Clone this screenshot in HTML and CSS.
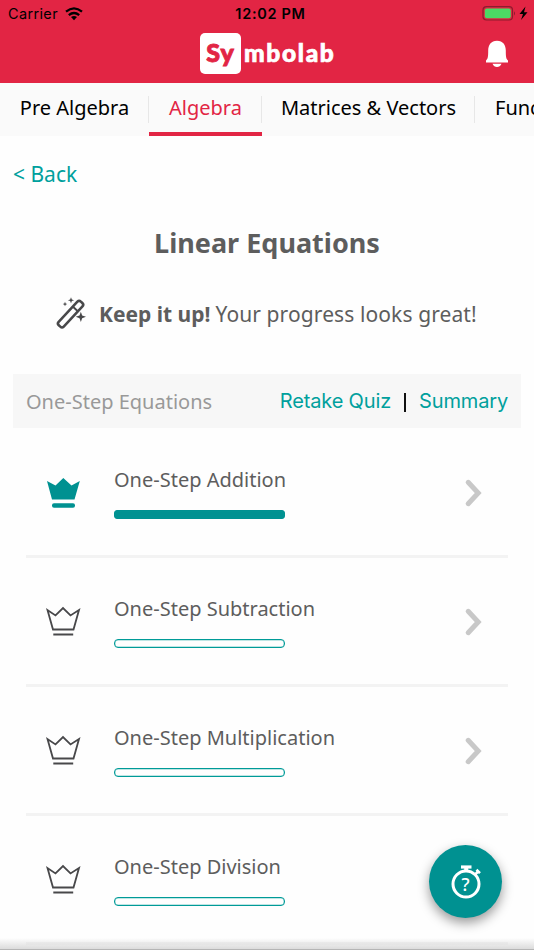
FILE: index.html
```html
<!DOCTYPE html>
<html lang="en">
<head>
<meta charset="utf-8">
<title>Symbolab</title>
<link rel="stylesheet" href="styles.css">
</head>
<body>
<svg class="defs" width="0" height="0">
  <symbol id="crown" viewBox="0 0 36 34"><path d="M2.500 5L8 24.500H28.500L34 5L25.500 10.400L18 3L10.500 10.400Z M8.300 29.500H28.200" fill="none" stroke="#48484a" stroke-width="1.800"/></symbol>
  <symbol id="chevron" viewBox="0 0 20 30"><path d="M4.200 4.300L14.200 15L4.200 25.700" fill="none" stroke="#c8c8c8" stroke-width="5" stroke-linecap="round" stroke-linejoin="miter"/></symbol>
</svg>
<div class="screen">
  <header class="header">
    <div class="status">
      <div class="carrier"><span class="carrier-name">Carrier</span>
        <svg width="18" height="14" viewBox="0 0 18 14"><g fill="none" stroke="#000" stroke-width="2.300"><path d="M1 4.700Q9-1.900 17 4.700"/><path d="M3.800 8.200Q9 3.900 14.200 8.200"/></g><path d="M6 10.100Q9 7.900 12 10.100L9 13.200Z"/></svg>
      </div>
      <span class="clock">12:02 PM</span>
      <svg class="battery" width="46" height="16" viewBox="0 0 46 16"><rect x="1" y=".7" width="29.500" height="13.300" rx="3.500" fill="none" stroke="#8e1c2d" stroke-width="1.200"/><rect x="2.800" y="2.500" width="26" height="9.700" rx="2" fill="#4cd964"/><path d="M32 5.200q2 2 0 4.300z" fill="#8e1c2d"/><path d="M43.500 .5L37.500 8.100H41L39 14L45.500 6.200H42Z"/></svg>
    </div>
    <div class="brand-row">
      <div class="brand"><span class="brand-tile">Sy</span><span class="brand-rest">mbolab</span></div>
      <svg class="bell" width="24" height="28" viewBox="0 0 24 28"><path d="M12 .7C6 .7 3.200 5 3.200 10.500C3.200 16.500 3 18.800 1 20.500V22.400H23V20.500C21 18.800 20.800 16.500 20.800 10.500C20.800 5 18 .7 12 .7ZM7.500 23.700H16.500Q15 27 12 27Q9 27 7.500 23.700Z" fill="#fff"/></svg>
    </div>
  </header>
  <nav class="tabs">
    <a class="tab tab-pre"><span>Pre Algebra</span></a>
    <a class="tab tab-active"><span>Algebra</span></a>
    <a class="tab tab-matrices"><span>Matrices &amp; Vectors</span></a>
    <a class="tab tab-func"><span>Functions</span></a>
  </nav>
  <main>
    <a class="back">&lt; Back</a>
    <h1>Linear Equations</h1>
    <div class="cheer">
      <svg width="32" height="32" viewBox="0 0 32 32"><g transform="rotate(-47 15 16)"><rect x="-2" y="12.800" width="34.500" height="7.400" rx="2.600" fill="none" stroke="#48484a" stroke-width="2.700"/><path d="M22.800 13V20" stroke="#48484a" stroke-width="2"/></g><g fill="#48484a"><path d="M26.500 13.500L27.900 17.600L32 19L27.900 20.400L26.500 24.500L25.100 20.400L21 19L25.100 17.600Z"/><path d="M16 -2L16.900 .4L19.300 1.300L16.900 2.200L16 4.600L15.100 2.200L12.700 1.300L15.100 .4Z"/><path d="M9.600 3L10.300 4.700L12 5.400L10.300 6.100L9.600 7.800L8.900 6.100L7.200 5.400L8.900 4.700Z"/></g></svg>
      <strong>Keep it up!</strong><span class="cheer-text">Your progress looks great!</span>
    </div>
    <section>
      <div class="group">
        <span class="group-name">One-Step Equations</span>
        <span class="links"><a>Retake Quiz</a><i></i><a class="summary">Summary</a></span>
      </div>
      <div class="list">
        <div class="row"><svg class="crown" viewBox="0 0 36 34"><path d="M2 5L7 23.500H29.500L34.800 5L26.500 9.500L18.300 2L10.500 9.500Z" fill="#009191"/><rect x="7" y="27.300" width="23" height="4.500" rx="2" fill="#009191"/></svg><div class="lesson"><span class="name">One-Step Addition</span><div class="bar bar-full"></div></div><svg class="chevron"><use href="#chevron"/></svg></div>
        <div class="row"><svg class="crown"><use href="#crown"/></svg><div class="lesson"><span class="name">One-Step Subtraction</span><div class="bar"></div></div><svg class="chevron"><use href="#chevron"/></svg></div>
        <div class="row"><svg class="crown"><use href="#crown"/></svg><div class="lesson"><span class="name">One-Step Multiplication</span><div class="bar"></div></div><svg class="chevron"><use href="#chevron"/></svg></div>
        <div class="row"><svg class="crown"><use href="#crown"/></svg><div class="lesson"><span class="name">One-Step Division</span><div class="bar"></div></div></div>
      </div>
    </section>
  </main>
  <div class="bottom-shade"></div>
  <button class="quiz" aria-label="Quiz"><svg width="34" height="38" viewBox="0 0 34 38"><g fill="none" stroke="#fff"><circle cx="17" cy="21" r="13" stroke-width="3"/><path d="M12 4H22.500" stroke-width="3.200"/><path d="M17.200 4V9" stroke-width="4"/><path d="M26 11.500L29.500 8.300M27.500 6.800L31 10.100" stroke-width="2.600"/></g></svg><span>?</span></button>
</div>
</body>
</html>
```

FILE: styles.css
```css
* { box-sizing: border-box; }
body { margin: 0; font-family: "Noto Sans", sans-serif; background: #fefefe; }
.defs { position: absolute; }
.screen { position: relative; width: 534px; height: 950px; overflow: hidden; background: #fefefe; }
.header { height: 83px; background: #e22544; }
.status { height: 27px; display: grid; grid-template-columns: 1fr auto 1fr; align-items: center; padding: 0 6px 0 8px; font-family: Inter, sans-serif; }
.carrier { display: flex; align-items: center; gap: 7px; }
.carrier-name { font-size: 14.5px; letter-spacing: .35px; }
.clock { font-size: 14.5px; font-weight: 600; letter-spacing: .7px; padding-left: 5px; }
.battery { justify-self: end; }
.brand-row { height: 56px; display: grid; grid-template-columns: 200px 1fr 49px; padding-top: 6px; }
.brand { grid-column: 2; display: flex; }
.brand-tile { width: 41px; height: 41px; border-radius: 5px; background: #fff; color: #e22544; display: flex; justify-content: center; font: 900 25px/39px Lato, sans-serif; letter-spacing: 1px; -webkit-text-stroke: .9px #e22544; }
.brand-rest { color: #fff; font: 900 24.5px/40px Lato, sans-serif; letter-spacing: 1.65px; margin-left: 3px; -webkit-text-stroke: .7px #fff; }
.bell { margin-top: 7px; }
.tabs { height: 53px; background: #fafafa; display: flex; }
.tab { flex: none; position: relative; height: 53px; text-align: center; font-size: 20px; line-height: 50px; color: #000; white-space: nowrap; border-bottom: 4px solid transparent; }
.tab + .tab::before { content: ""; position: absolute; left: -1px; top: 13px; width: 1px; height: 27px; background: #e7e7e7; }
.tab-pre { width: 149px; }
.tab-active { width: 113px; color: #e22544; border-color: #e22544; }
.tab-matrices { width: 213px; }
.tab-func { width: 130px; text-align: left; padding-left: 20px; }
main { padding: 0 13px; }
.back { display: block; margin-top: 22px; height: 32px; line-height: 32px; font-size: 21px; color: #00a09d; }
h1 { margin: 33px 0 0; height: 40px; line-height: 40px; font-size: 27px; text-align: center; color: #5d5d5d; }
.cheer { display: flex; align-items: center; height: 32px; margin: 35px 0 0 43px; font-size: 21px; color: #5d5d5d; white-space: nowrap; }
.cheer svg { width: 30px; height: 30px; overflow: visible; }
.cheer strong { margin-left: 13px; }
.cheer-text { margin-left: 5px; letter-spacing: .1px; }
section { margin-top: 44px; }
.group { height: 54px; background: #f7f7f7; display: flex; align-items: center; justify-content: space-between; padding: 0 13px; color: #999; font-size: 20px; }
.links { display: flex; align-items: center; color: #00a09d; font: 20px Inter, sans-serif; letter-spacing: -.15px; }
.links i { width: 2px; height: 19px; background: #111; margin: 2px 13px 0; }
.list { padding: 0 13px; }
.row { height: 129px; border-bottom: 3px solid #f3f3f3; display: flex; align-items: center; }
.row:first-child { height: 130px; }
.crown { width: 36px; height: 34px; margin: 2px 0 0 19px; }
.lesson { width: 330px; margin-left: 33px; padding-top: 1px; }
.name { display: block; height: 28px; line-height: 28px; font-size: 20px; color: #5d5d5d; white-space: nowrap; }
.bar { width: 171px; height: 9px; margin-top: 16px; border: 1px solid #009b98; border-radius: 4px; box-shadow: inset 0 0 0 .5px rgba(0,155,152,.5); }
.bar-full { background: #009191; border-color: #009191; border-radius: 3px; }
.chevron { width: 20px; height: 30px; margin: 2px 0 0 20px; }
.bottom-shade { position: absolute; left: 0; right: 0; bottom: 0; height: 12px; background: linear-gradient(transparent, #dcdcdc 90%, #999); }
.quiz { position: absolute; left: 429px; top: 845px; width: 73px; height: 73px; border: 0; padding: 0; border-radius: 50%; background: #009191; box-shadow: 0 5px 12px rgba(0,0,0,.4); display: grid; place-items: center; }
.quiz svg, .quiz span { grid-area: 1 / 1; }
.quiz span { color: #fff; font: 500 18px "Noto Sans", sans-serif; padding-top: 4px; }
```
